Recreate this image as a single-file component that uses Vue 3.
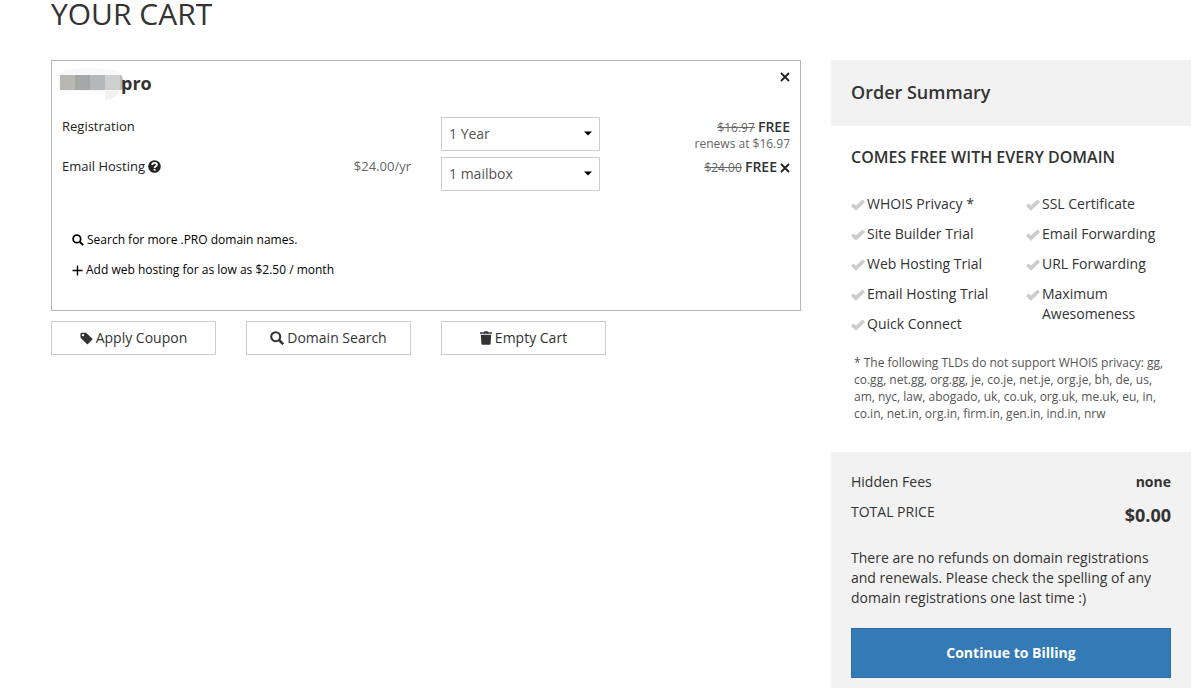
<script setup>
import { ref } from 'vue'

const term = ref('1 Year')
const mailboxes = ref('1 mailbox')

const perks = [
  ['WHOIS Privacy *', 'Site Builder Trial', 'Web Hosting Trial', 'Email Hosting Trial', 'Quick Connect'],
  ['SSL Certificate', 'Email Forwarding', 'URL Forwarding', 'Maximum Awesomeness'],
]
</script>

<template>
  <div class="page">
    <h1>YOUR CART</h1>
    <div class="columns">
      <main>
        <section class="cart">
          <header class="cart-head">
            <h2>
              <svg class="mask" width="68" height="34" viewBox="0 0 68 34" aria-hidden="true">
                <path d="M0 14C0 6 4 3 12 2C26 0 42 1 54 3C62 4 66 9 66 16C66 20 63 23 61 25C59 29 53 34 47 33V24H8C3 24 0 20 0 14Z" fill="#f8f8f8" />
                <path d="M47 24H61C59 29 53 33 47 33Z" fill="#f1f1f1" />
                <path d="M2 8H17V23H2Z" fill="#b8b7b2" />
                <path d="M17 8H32V23H17Z" fill="#a6a7a9" />
                <path d="M32 8H47V23H32Z" fill="#b5b7ba" />
                <path d="M47 8H62V23H47Z" fill="#cecfcf" />
                <path d="M62 8H63L65 12V20L64 23H62Z" fill="#bcbcb8" />
              </svg>
              <span>pro</span>
            </h2>
            <button class="icon-btn" type="button" aria-label="Remove domain">
              <svg width="10" height="10" viewBox="0 0 10 10"><path d="M1 1L9 9M9 1L1 9" fill="none" stroke="currentColor" stroke-width="1.8" /></svg>
            </button>
          </header>

          <div class="row">
            <div class="item"><label for="term">Registration</label></div>
            <div class="picker">
              <select id="term" v-model="term"><option>1 Year</option><option>2 Years</option></select>
              <svg class="caret" width="8" height="5" viewBox="0 0 8 5"><path d="M0 0.5H8L4 4.5Z" /></svg>
            </div>
            <div class="cost">
              <div><s>$16.97</s> <strong>FREE</strong></div>
              <div>renews at $16.97</div>
            </div>
          </div>
          <div class="row">
            <div class="item">
              <label for="mailboxes">Email Hosting</label>
              <svg class="help" width="13" height="13" viewBox="0 0 13 13" aria-hidden="true">
                <circle cx="6.5" cy="6.5" r="6.3" fill="#222" />
                <path d="M4.2 5.1C4.2 3.6 5.2 2.9 6.6 2.9C8 2.9 8.9 3.7 8.9 4.8C8.9 6.3 6.6 6.3 6.6 8" fill="none" stroke="#fff" stroke-width="1.9" />
                <path d="M5.6 8.9H7.6V10.6H5.6Z" fill="#fff" />
              </svg>
              <span class="rate">$24.00/yr</span>
            </div>
            <div class="picker">
              <select id="mailboxes" v-model="mailboxes"><option>1 mailbox</option><option>2 mailboxes</option></select>
              <svg class="caret" width="8" height="5" viewBox="0 0 8 5"><path d="M0 0.5H8L4 4.5Z" /></svg>
            </div>
            <div class="cost">
              <div class="removable">
                <span><s>$24.00</s> <strong>FREE</strong></span>
                <button class="icon-btn" type="button" aria-label="Remove email hosting">
                  <svg width="10" height="10" viewBox="0 0 10 10"><path d="M1 1L9 9M9 1L1 9" fill="none" stroke="currentColor" stroke-width="1.8" /></svg>
                </button>
              </div>
            </div>
          </div>

          <nav class="extras">
            <a href="#search">
              <svg width="12" height="12" viewBox="0 0 14 14"><circle cx="5.7" cy="5.7" r="4.4" fill="none" stroke="currentColor" stroke-width="2" /><path d="M9 9L13 13" stroke="currentColor" stroke-width="2.4" /></svg>
              Search for more .PRO domain names.
            </a>
            <a href="#hosting">
              <svg width="11" height="11" viewBox="0 0 11 11"><path d="M5.5 0.5V10.5M0.5 5.5H10.5" stroke="currentColor" stroke-width="1.4" /></svg>
              Add web hosting for as low as $2.50 / month
            </a>
          </nav>
        </section>

        <div class="actions">
          <button type="button">
            <svg width="13" height="13" viewBox="0 0 13 13"><path fill="currentColor" fill-rule="evenodd" d="M0.5 1.5Q0.5 0.7 1.3 0.7H6L12.3 6.6Q12.8 7.1 12.3 7.6L8 12Q7.4 12.5 6.9 12L0.5 5.8ZM3.1 2.1A1.1 1.1 0 1 0 3.1 4.3A1.1 1.1 0 1 0 3.1 2.1Z" /></svg>
            Apply Coupon
          </button>
          <button type="button">
            <svg width="14" height="14" viewBox="0 0 14 14"><circle cx="5.7" cy="5.7" r="4.5" fill="none" stroke="currentColor" stroke-width="2.1" /><path d="M9 9L13.2 13.2" stroke="currentColor" stroke-width="2.5" /></svg>
            Domain Search
          </button>
          <button type="button">
            <svg width="12" height="14" viewBox="0 0 12 14"><path fill="currentColor" d="M0 1.2H3.8L4.4 0.2H7.6L8.2 1.2H12V2.8H0ZM0.8 3.7H11.2L10.6 13Q10.5 13.8 9.7 13.8H2.3Q1.5 13.8 1.4 13Z" /></svg>
            Empty Cart
          </button>
        </div>
      </main>

      <aside>
        <h2 class="summary-title">Order Summary</h2>
        <section class="perks">
          <h3>COMES FREE WITH EVERY DOMAIN</h3>
          <div class="perk-columns">
            <ul v-for="(list, i) in perks" :key="i">
              <li v-for="perk in list" :key="perk">
                <svg width="14" height="12" viewBox="0 0 14 12"><path d="M0 6.9L2.3 4.4L5 6.6L11.6 0.4L14 2.9L5 11.7Z" fill="#ccc" /></svg>
                <span>{{ perk }}</span>
              </li>
            </ul>
          </div>
          <p class="note">* The following TLDs do not support WHOIS privacy: gg, co.gg, net.gg, org.gg, je, co.je, net.je, org.je, bh, de, us, am, nyc, law, abogado, uk, co.uk, org.uk, me.uk, eu, in, co.in, net.in, org.in, firm.in, gen.in, ind.in, nrw</p>
        </section>
        <section class="totals">
          <div class="line"><span>Hidden Fees</span><strong>none</strong></div>
          <div class="line"><span>TOTAL PRICE</span><strong class="total">$0.00</strong></div>
          <p>There are no refunds on domain registrations and renewals. Please check the spelling of any domain registrations one last time :)</p>
          <button class="continue" type="button">Continue to Billing</button>
        </section>
      </aside>
    </div>
  </div>
</template>

<style>
body {
  margin: 0;
  background: #fff;
}
</style>

<style scoped>
* {
  box-sizing: border-box;
}
.page {
  padding: 0 5px 0 51px;
  font: 14px/20px "Open Sans", sans-serif;
  color: #333;
}
button,
select {
  font: inherit;
  color: inherit;
  cursor: pointer;
}
h1,
h2,
h3,
p,
ul {
  margin: 0;
  padding: 0;
  font-weight: 400;
}
h1 {
  font-size: 30px;
  line-height: 28px;
  padding-bottom: 32px;
}
.columns {
  display: grid;
  grid-template-columns: 750fr 360fr;
  gap: 30px;
  align-items: start;
}
.cart {
  border: 1px solid #b5b5b5;
  padding: 6px 10px 30px;
}
.cart-head {
  display: flex;
  justify-content: space-between;
  height: 50px;
}
.cart-head h2 {
  display: flex;
  margin-left: -4px;
  font-size: 18px;
  line-height: 32px;
  font-weight: 700;
}
.mask {
  margin-right: -5px;
}
.icon-btn {
  display: flex;
  align-items: center;
  height: 20px;
  padding: 0;
  border: 0;
  background: none;
  color: #222;
}
.row {
  display: grid;
  grid-template-columns: 349fr 159fr 160fr;
  column-gap: 30px;
  height: 40px;
  font-size: 13px;
}
.item {
  display: flex;
  align-items: center;
  height: 18px;
  color: #222;
}
.help {
  margin-left: 3px;
}
.rate {
  margin-left: auto;
  color: #666;
}
.picker {
  position: relative;
}
select {
  display: block;
  width: 100%;
  height: 34px;
  padding: 0 20px 0 7px;
  border: 1px solid #ccc;
  border-radius: 0;
  background: #fff;
  appearance: none;
  font-size: 14px;
  color: #555;
}
.caret {
  position: absolute;
  top: 14px;
  right: 8px;
  pointer-events: none;
}
.cost {
  padding-top: 2px;
  font-size: 12px;
  line-height: 16px;
  text-align: right;
  color: #666;
}
.cost strong {
  font-size: 14px;
  font-weight: 600;
  color: #333;
}
.removable {
  display: flex;
  justify-content: flex-end;
  align-items: center;
  gap: 3px;
}
.removable .icon-btn {
  height: 16px;
}
.extras {
  display: flex;
  flex-direction: column;
  align-items: flex-start;
  gap: 10px;
  padding: 33px 10px 0;
}
.extras a {
  display: flex;
  align-items: center;
  gap: 3px;
  font-size: 12px;
  color: #000;
  text-decoration: none;
}
.actions {
  display: grid;
  grid-template-columns: repeat(4, 165fr);
  column-gap: 30px;
  margin-top: 10px;
}
.actions button {
  display: flex;
  align-items: center;
  justify-content: center;
  gap: 3px;
  height: 34px;
  padding: 0;
  border: 1px solid #ccc;
  background: #fff;
}
.summary-title {
  padding: 21px 20px 23px;
  background: #f2f2f2;
  font-size: 18px;
  line-height: 22px;
  font-weight: 600;
}
.perks {
  padding: 21px 20px 30px;
}
h3 {
  font-size: 16px;
  font-weight: 600;
}
.perk-columns {
  display: grid;
  grid-template-columns: 145fr 145fr;
  column-gap: 30px;
  padding-top: 27px;
}
ul {
  display: flex;
  flex-direction: column;
  gap: 10px;
  list-style: none;
}
li {
  display: flex;
  gap: 2px;
}
li svg {
  flex: none;
  margin-top: 5px;
}
.note {
  padding: 20px 0 0 3px;
  font-size: 12px;
  line-height: 17px;
  color: #555;
}
.totals {
  padding: 20px 20px 10px;
  background: #f2f2f2;
}
.line {
  display: flex;
  justify-content: space-between;
  margin-bottom: 10px;
}
.line strong {
  font-weight: 700;
}
.line .total {
  font-size: 18px;
  line-height: 26px;
}
.totals p {
  padding-top: 10px;
  margin-bottom: 20px;
}
.continue {
  display: block;
  width: 100%;
  height: 50px;
  border: 1px solid #2e6da4;
  background: #337ab7;
  color: #fff;
  font-weight: 700;
}
</style>
